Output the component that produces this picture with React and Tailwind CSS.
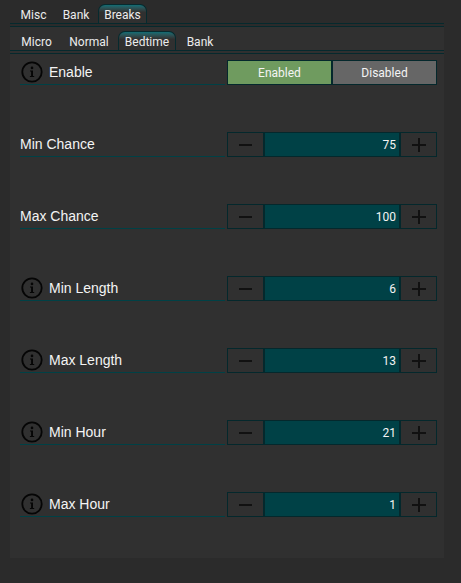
function InfoIcon() {
  return (
    <svg width="22" height="22" viewBox="0 0 22 22" className="shrink-0">
      <circle cx="11" cy="11" r="9.7" fill="none" stroke="#050505" strokeWidth="1.8" />
      <circle cx="11" cy="6.9" r="1.3" fill="#050505" />
      <path d="M9 9.5h3v5.4h1.2v1.1H8.9v-1.1h1.2v-4.3H9z" fill="#050505" />
    </svg>
  )
}

function Tab({ label, active, width }) {
  if (active) {
    return (
      <div
        className="flex h-[19px] items-center justify-center rounded-t-[7px] border border-b-0 border-[#062a2e] bg-gradient-to-b from-[#0f6d74] from-0% to-[#303030] to-40% pt-[2px] font-['Roboto',sans-serif] text-[12px] text-[#ececec]"
        style={{ width }}
      >
        {label}
      </div>
    )
  }
  return (
    <div
      className="flex h-[19px] items-center justify-center pt-[2px] font-['Roboto',sans-serif] text-[12px] text-[#ececec]"
      style={{ width }}
    >
      {label}
    </div>
  )
}

function TabLines() {
  return <div className="h-[4px] border-y border-[#06292d]" />
}

function Label({ text, info }) {
  return (
    <div className="flex h-[25px] w-[205px] items-center border-b border-[#004146] font-['Liberation_Sans',sans-serif] text-[14px] text-[#f4f4f4]">
      {info ? (
        <div className="flex items-center gap-[6px] pl-[1px]">
          <InfoIcon />
          <span>{text}</span>
        </div>
      ) : (
        <span>{text}</span>
      )}
    </div>
  )
}

function Stepper({ value }) {
  return (
    <div className="flex h-[25px] w-[210px] border border-[#04282c]">
      <div className="flex w-[37px] items-center justify-center border-r-2 border-[#04282c] bg-[#303030]">
        <div className="h-[2px] w-[13px] bg-[#111111]" />
      </div>
      <div className="flex flex-1 items-center justify-end bg-[#004146] pr-[3px] font-['Roboto',sans-serif] text-[12px] text-[#f4f4f4]">
        {value}
      </div>
      <div className="relative flex w-[37px] items-center justify-center border-l-2 border-[#04282c] bg-[#303030]">
        <div className="h-[2px] w-[14px] bg-[#111111]" />
        <div className="absolute h-[14px] w-[2px] bg-[#111111]" />
      </div>
    </div>
  )
}

function Row({ text, info, value }) {
  return (
    <div className="flex items-start justify-between">
      <Label text={text} info={info} />
      <Stepper value={value} />
    </div>
  )
}

const rows = [
  { text: 'Min Chance', info: false, value: 75 },
  { text: 'Max Chance', info: false, value: 100 },
  { text: 'Min Length', info: true, value: 6 },
  { text: 'Max Length', info: true, value: 13 },
  { text: 'Min Hour', info: true, value: 21 },
  { text: 'Max Hour', info: true, value: 1 },
]

export default function App() {
  return (
    <div className="h-[583px] w-[461px] bg-[#2b2b2b] pl-[10px] pt-[4px]">
      <div className="w-[434px]">
        <div className="flex pl-[3px]">
          <Tab label="Misc" width={41} />
          <Tab label="Bank" width={44} />
          <Tab label="Breaks" active width={49} />
        </div>
        <TabLines />
        <div className="h-[531px] bg-[#303030]">
          <div className="flex pl-[3px] pt-[4px]">
            <Tab label="Micro" width={47} />
            <Tab label="Normal" width={58} />
            <Tab label="Bedtime" active width={58} />
            <Tab label="Bank" width={48} />
          </div>
          <TabLines />
          <div className="flex flex-col gap-[47px] pl-[10px] pr-[7px] pt-[6px]">
            <div className="flex items-start justify-between">
              <Label text="Enable" info />
              <div className="flex h-[25px] w-[210px] border border-[#04282c] font-['Roboto',sans-serif] text-[12px] text-[#f4f4f4]">
                <div className="flex flex-1 items-center justify-center border-r-2 border-[#04282c] bg-[#6f9b5f]">
                  Enabled
                </div>
                <div className="flex flex-1 items-center justify-center bg-[#666666]">
                  Disabled
                </div>
              </div>
            </div>
            {rows.map((row) => (
              <Row key={row.text} text={row.text} info={row.info} value={row.value} />
            ))}
          </div>
        </div>
      </div>
    </div>
  )
}
